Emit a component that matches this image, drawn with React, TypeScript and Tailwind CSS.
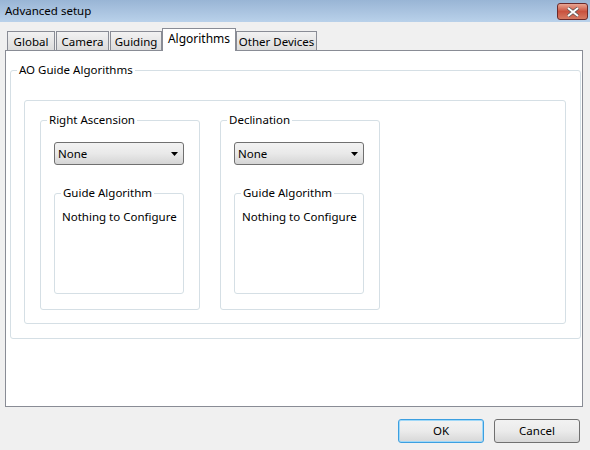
const font = { fontFamily: '"Noto Sans", "Segoe UI", sans-serif' };

const tabs = [
  { name: 'Global', cls: 'ml-[2px] w-[48px]' },
  { name: 'Camera', cls: 'ml-[1px] w-[53px]' },
  { name: 'Guiding', cls: 'ml-[1px] w-[52px]' },
  { name: 'Algorithms', cls: 'w-[74px]' },
  { name: 'Other Devices', cls: 'w-[81px]' },
];

function GroupBox({
  label,
  className,
  children,
}: {
  label?: string;
  className: string;
  children?: React.ReactNode;
}) {
  return (
    <div className={`relative border border-[#d5dfe5] rounded-[3px] ${className}`}>
      {label && (
        <span className="absolute top-[-9px] left-[6px] bg-white px-[2px] leading-[16px]">{label}</span>
      )}
      {children}
    </div>
  );
}

function Choice() {
  return (
    <div className="flex items-center justify-between w-[130px] h-[23px] border border-[#707070] rounded-[3px] bg-gradient-to-b from-[#f2f2f2] via-[#e9e9e9] to-[#d5d5d5] pl-[3px] pr-[5px]">
      <span>None</span>
      <svg width="7" height="4" viewBox="0 0 7 4">
        <path d="M0 0h7L3.5 4z" fill="#000" />
      </svg>
    </div>
  );
}

function AxisGroup({ label }: { label: string }) {
  return (
    <GroupBox label={label} className="w-[160px] h-[190px] pt-[21px] pl-[13px]">
      <Choice />
      <GroupBox label="Guide Algorithm" className="mt-[28px] w-[130px] h-[101px] pt-[14px] pl-[7px]">
        <span className="leading-[16px]">Nothing to Configure</span>
      </GroupBox>
    </GroupBox>
  );
}

export default function App() {
  return (
    <div className="w-[590px] h-[450px] bg-[#f0f0f0] flex flex-col text-[11.5px] text-black" style={font}>
      {/* title bar */}
      <div className="h-[22px] flex items-start justify-between bg-gradient-to-b from-[#99b5d5] to-[#b9d1ea]">
        <span className="pl-[5px] pt-[3px] leading-[16px]">Advanced setup</span>
        <div className="mt-[3px] mr-[2px] w-[31px] h-[17px] rounded-[3px] border border-[#6b2a2a] bg-gradient-to-b from-[#e8a593] via-[#c9523f] to-[#d57a63] flex items-center justify-center">
          <svg width="14" height="10" viewBox="0 0 14 10">
            <path d="M2 1l5 4 5-4M2 9l5-4 5 4" stroke="#555" strokeWidth="3.4" fill="none" />
            <path d="M2 1l5 4 5-4M2 9l5-4 5 4" stroke="#fff" strokeWidth="2" fill="none" />
          </svg>
        </div>
      </div>

      {/* tabs */}
      <div className="h-[28px] flex items-end pl-[5px]">
        {tabs.map((t) => {
          const active = t.name === 'Algorithms';
          return (
            <div
              key={t.name}
              className={`${t.cls} text-center border border-b-0 border-[#898c95] leading-[16px] ${
                active
                  ? 'relative z-10 h-[23px] -mb-[1px] pt-[2px] bg-white text-[12px]'
                  : 'h-[19px] pt-[2px] bg-gradient-to-b from-[#f2f2f2] to-[#dcdcdc]'
              }`}
            >
              {t.name}
            </div>
          );
        })}
      </div>

      {/* panel */}
      <div className="ml-[5px] w-[578px] h-[357px] border border-[#898c95] bg-white pt-[19px] pl-[4px]">
        <GroupBox label="AO Guide Algorithms" className="w-[571px] h-[269px] pt-[29px] pl-[13px]">
          <div className="w-[542px] h-[224px] border border-[#d5dfe5] rounded-[3px] pt-[19px] pl-[15px] flex items-start gap-[20px]">
            <AxisGroup label="Right Ascension" />
            <AxisGroup label="Declination" />
          </div>
        </GroupBox>
      </div>

      {/* buttons */}
      <div className="flex justify-end gap-[10px] mt-[12px] pr-[10px]">
        <button className="w-[86px] h-[24px] rounded-[3px] border border-[#3c9fe0] shadow-[inset_0_0_0_1px_#9fd8f8] bg-gradient-to-b from-[#f2f2f2] via-[#ebebeb] to-[#d7d7d7]">
          OK
        </button>
        <button className="w-[86px] h-[24px] rounded-[3px] border border-[#707070] bg-gradient-to-b from-[#f2f2f2] via-[#ebebeb] to-[#d7d7d7]">
          Cancel
        </button>
      </div>
    </div>
  );
}
